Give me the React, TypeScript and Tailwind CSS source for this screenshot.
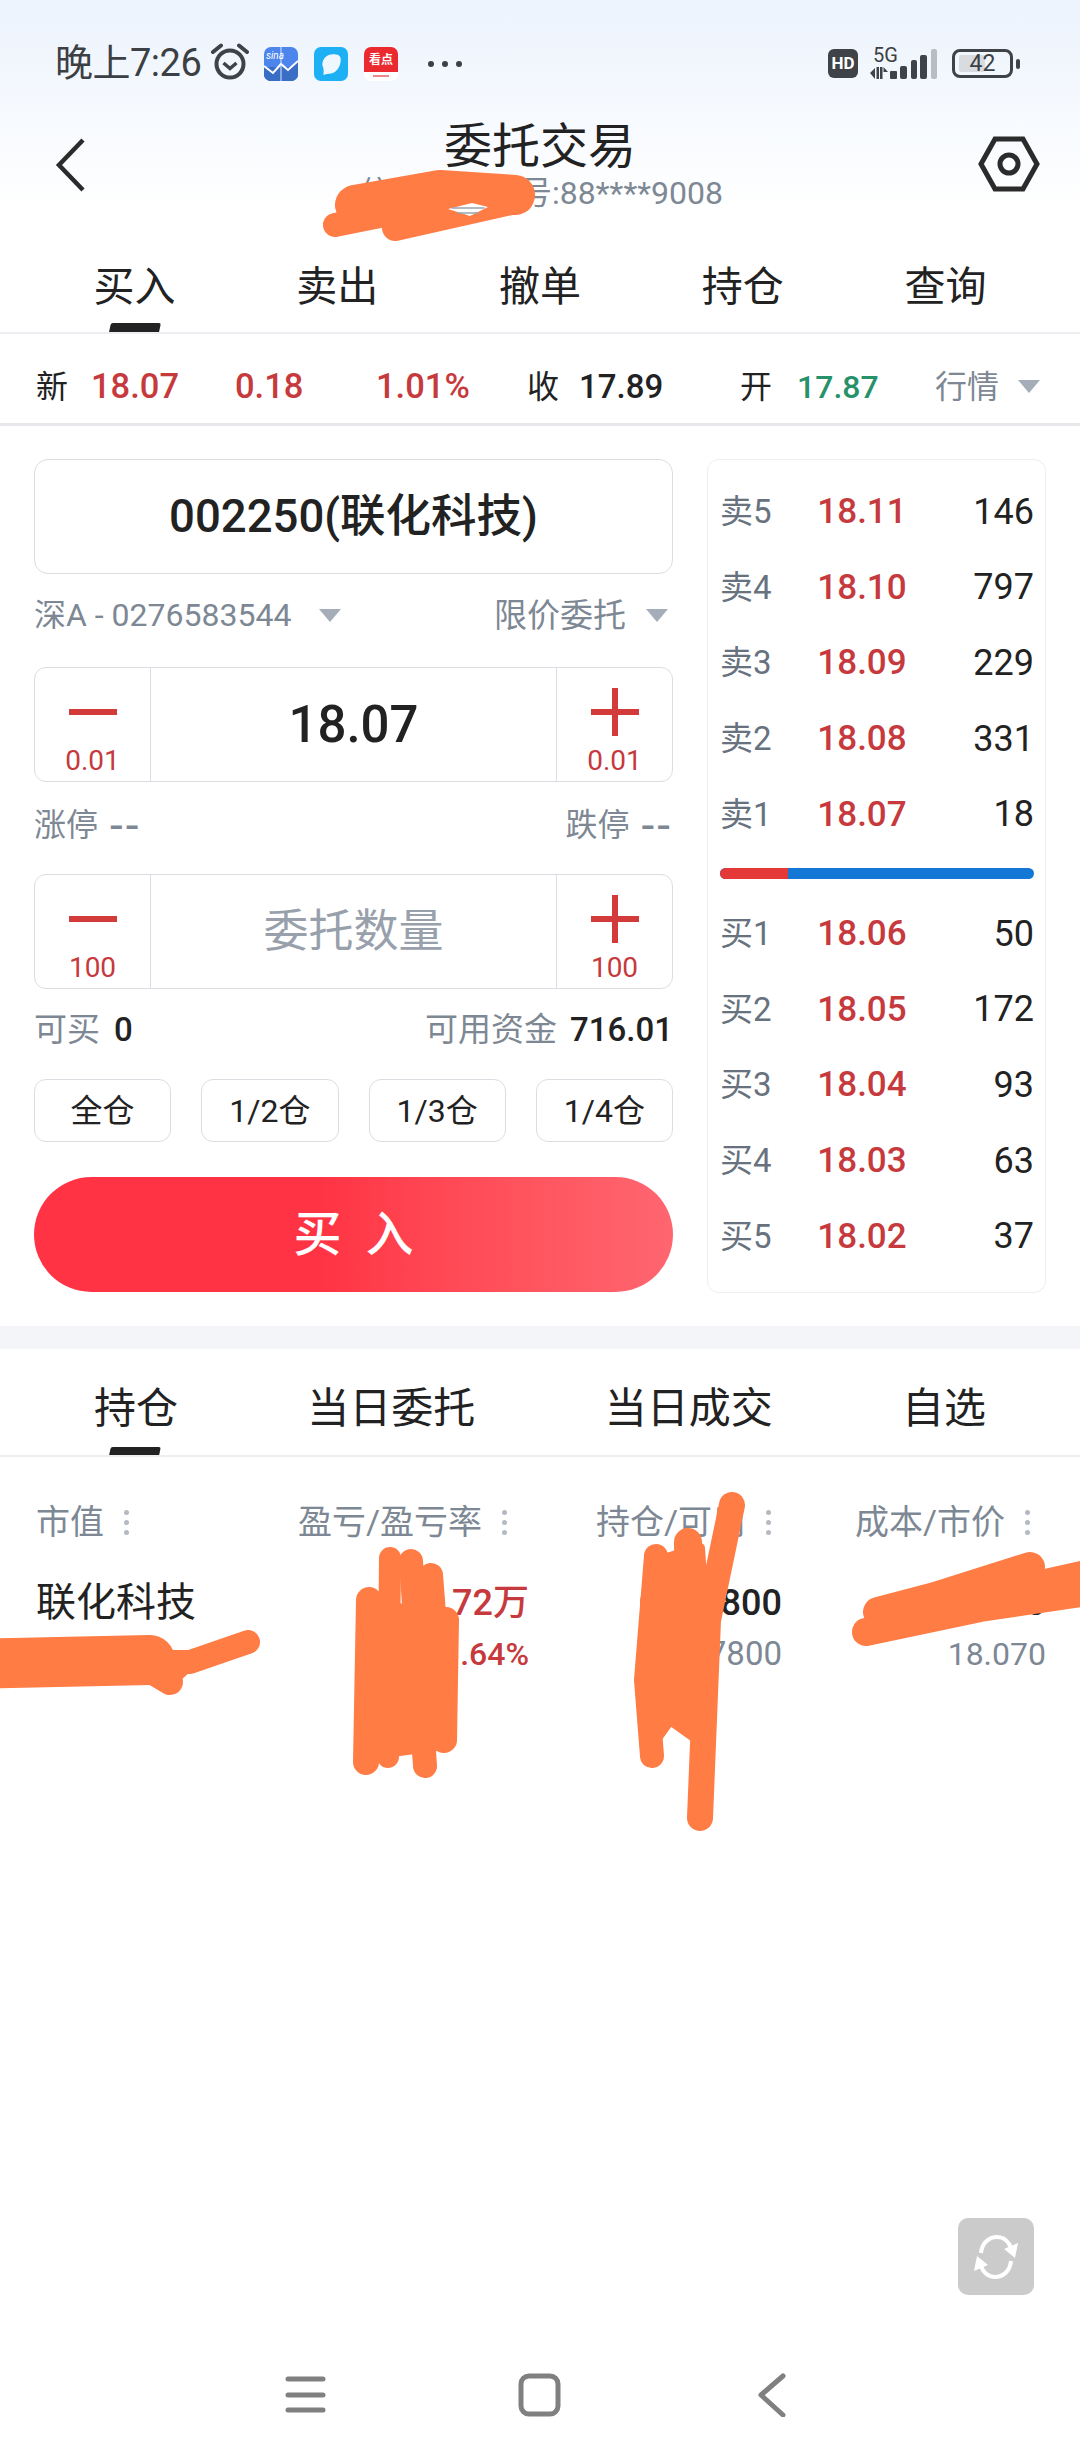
import React from "react";

const FONT = "[font-family:Roboto,'Noto_Sans_CJK_SC',sans-serif]";

function Triangle({ className }: { className: string }) {
  return (
    <svg viewBox="0 0 22 13" className={className}>
      <path d="M0 0H22L11 13Z" fill="#a4adb8" />
    </svg>
  );
}

function StatusBar() {
  return (
    <div className="flex h-[100px] items-start pl-[55px] pt-[44px]">
      <span className="w-[155px] text-[38px] leading-[38px] text-[#3c3f43] tracking-[-0.5px] whitespace-nowrap">晚上7:26</span>
      <svg viewBox="0 0 40 38" className="h-[38px] w-[40px] -mt-[1px]" fill="none" stroke="#3f4246">
        <circle cx="20" cy="21" r="13.5" strokeWidth="4" />
        <path d="M13.5 20l6.5 5.5 6.5-5.5" strokeWidth="3.5" />
        <path d="M3 9 11 2.5M37 9 29 2.5" strokeWidth="4" strokeLinecap="round" />
      </svg>
      <div className="relative ml-[14px] mt-[3px] h-[34px] w-[34px] overflow-hidden rounded-[7px] bg-[#4c86ec]">
        <svg viewBox="0 0 34 34" className="h-full w-full">
          <rect y="20" width="34" height="14" fill="#3a6ec4" />
          <path d="M0 19l9 7 8-9 7 6 10-9v21H0Z" fill="#3a6ec4" />
          <path d="M0 19l9 7 8-9 7 6 10-9" fill="none" stroke="#fff" strokeWidth="2" />
          <rect x="16.5" width="1" height="34" fill="#dbe7fb" />
        </svg>
        <span className="absolute left-[2px] top-[3px] text-[10px] leading-[12px] italic text-white">sina</span>
      </div>
      <div className="ml-[16px] mt-[3px] flex h-[34px] w-[34px] items-center justify-center rounded-[7px] bg-[#1eb0f5]">
        <svg viewBox="0 0 24 24" className="h-[26px] w-[26px]">
          <path d="M4 13C4 7 8 3 14 3c4 0 7 1 7 5 0 7-5 13-11 13-2 0-4 1-5 1 0-2 1-4-1-9Z" fill="#eef7fe" />
        </svg>
      </div>
      <div className="relative ml-[16px] mt-[3px] h-[34px] w-[34px] overflow-hidden rounded-[7px] bg-white">
        <div className="flex h-[25px] items-center justify-center bg-[#ea2a2e] text-[12px] font-bold leading-none text-white whitespace-nowrap">看点</div>
        <div className="mx-auto mt-[3px] h-[2px] w-[16px] bg-[#e88]" />
      </div>
      <div className="ml-[30px] mt-[17px] flex gap-[8px]">
        <span className="h-[6px] w-[6px] rounded-full bg-[#3c3f43]" />
        <span className="h-[6px] w-[6px] rounded-full bg-[#3c3f43]" />
        <span className="h-[6px] w-[6px] rounded-full bg-[#3c3f43]" />
      </div>
      <div className="ml-auto flex items-start pr-[67px]">
        <div className="mt-[5px] flex h-[29px] w-[30px] items-center justify-center rounded-[6px] bg-[#3f4246] text-[17px] font-bold leading-none text-white">HD</div>
        <div className="relative ml-[12px] mt-[5px] h-[30px] w-[67px]">
          <svg viewBox="0 0 67 30" className="h-[30px] w-[67px]" fill="#3f4246">
            <path d="M0 24 5 19V30ZM6.500 18H9V30H6.500ZM10 18H12.500V30H10ZM13.500 18 18 23H13.500Z" />
            <rect x="20" y="22" width="7" height="8" rx="1" />
            <rect x="30" y="17" width="7" height="13" rx="2" />
            <rect x="41" y="11" width="6" height="19" rx="2" />
            <rect x="50" y="6" width="7" height="24" rx="2" />
            <rect x="61" y="0" width="6" height="30" rx="2" fill="#b9bcc0" />
          </svg>
          <span className="absolute -top-[4px] left-[3px] text-[20px] leading-[20px] text-[#3c3f43]">5G</span>
        </div>
        <div className="relative ml-[15px] mt-[5px] flex h-[29px] w-[61px] items-center justify-center rounded-[8px] border-[3px] border-[#3f4246]">
          <span className="absolute bottom-[3px] left-[4px] top-[3px] w-[26px] rounded-[2px] bg-[#d8dbdf]" />
          <span className="relative text-[23px] leading-none text-[#3c3f43]">42</span>
          <span className="absolute -right-[10px] top-[7px] h-[10px] w-[4px] rounded-[2px] bg-[#3f4246]" />
        </div>
      </div>
    </div>
  );
}

function Header() {
  return (
    <div className="flex h-[110px] items-start justify-between px-[40px]">
      <div className="w-[62px] pl-[14px]">
        <svg viewBox="0 0 32 54" className="mt-[38px] h-[54px] w-[32px]" fill="none" stroke="#2b2b2b" strokeWidth="4.5">
          <path d="M29 2 5 27l24 25" />
        </svg>
      </div>
      <div className="flex flex-col items-center">
        <span className="mt-[20px] text-[48px] leading-[54px] text-[#222]">委托交易</span>
        <span className="ml-[3px] mt-[1px] text-[32px] leading-[36px] text-[#7d8894] whitespace-nowrap">信用资金账号:88****9008</span>
      </div>
      <svg viewBox="0 0 62 56" className="mt-[36px] h-[56px] w-[62px]" fill="none" stroke="#2b2b2b">
        <path d="M17 3H45L59 28 45 53H17L3 28Z" strokeWidth="5" />
        <circle cx="31" cy="28" r="9" strokeWidth="5" />
      </svg>
    </div>
  );
}

function MainTabs() {
  return (
    <div className="grid h-[124px] grid-cols-5 border-b-[2px] border-[#eceef1] px-[33px]">
      {["买入", "卖出", "撤单", "持仓", "查询"].map((t, i) => (
        <div key={t} className="relative pt-[54px] text-center text-[41px] leading-[46px] text-[#222]">
          {t}
          {i === 0 && <span className="absolute bottom-0 left-[77px] h-[9px] w-[50px] -skew-x-12 rounded-t-[2px] bg-[#222]" />}
        </div>
      ))}
    </div>
  );
}

function QuoteRow() {
  return (
    <div className="flex h-[92px] items-center border-b-[3px] border-[#e6e8eb] pl-[36px] pt-[16px] text-[34.5px] font-medium leading-none whitespace-nowrap">
      <span className="w-[55px] text-[32px] font-normal text-[#222]">新</span>
      <span className="w-[144px] text-[#c63a3e]">18.07</span>
      <span className="w-[141px] text-[#c63a3e]">0.18</span>
      <span className="w-[151px] text-[#c63a3e]">1.01%</span>
      <span className="w-[52px] text-[32px] font-normal text-[#222]">收</span>
      <span className="w-[161px] text-[33px] text-[#222]">17.89</span>
      <span className="w-[57px] text-[32px] font-normal text-[#222]">开</span>
      <span className="w-[138px] text-[32px] text-[#27916a]">17.87</span>
      <span className="w-[83px] text-[32px] font-normal text-[#7d8894]">行情</span>
      <Triangle className="h-[13px] w-[22px]" />
    </div>
  );
}

function Stepper({ step, value, placeholder }: { step: string; value?: string; placeholder?: string }) {
  const Side = ({ plus }: { plus: boolean }) => (
    <div className="flex w-[115px] flex-col items-center">
      <svg viewBox="0 0 48 48" className="mt-[20px] h-[48px] w-[48px]">
        <rect y="21" width="48" height="6" fill="#d33b3b" />
        {plus && <rect x="21" width="6" height="48" fill="#d33b3b" />}
      </svg>
      <span className="mt-[10px] text-[28px] leading-[30px] text-[#c63a3e]">{step}</span>
    </div>
  );
  return (
    <div className="flex h-[115px] rounded-[12px] border border-[#dadee3]">
      <Side plus={false} />
      <div className="flex flex-1 items-center justify-center border-x border-[#dadee3]">
        {value ? (
          <span className="text-[51px] font-medium leading-none text-[#222]">{value}</span>
        ) : (
          <span className="text-[45px] leading-none text-[#98a1ab]">{placeholder}</span>
        )}
      </div>
      <Side plus />
    </div>
  );
}

function LimitLabel({ text }: { text: string }) {
  return (
    <span className="flex items-center">
      {text}
      <span className="ml-[12px] text-[46px] leading-[32px] tracking-[3px]">--</span>
    </span>
  );
}

function TradeForm() {
  return (
    <div className="w-[639px]">
      <div className="flex h-[115px] items-center justify-center rounded-[14px] border border-[#dadee3] text-[45.5px] font-medium leading-none text-[#222]">
        002250(联化科技)
      </div>
      <div className="flex h-[93px] items-center pb-[11px] text-[32px] leading-none text-[#7d8894]">
        <span className="w-[285px] whitespace-nowrap">深A - 0276583544</span>
        <Triangle className="h-[13px] w-[22px]" />
        <span className="ml-auto text-[33px]">限价委托</span>
        <Triangle className="ml-[20px] mr-[5px] h-[13px] w-[22px]" />
      </div>
      <Stepper step="0.01" value="18.07" />
      <div className="flex h-[92px] items-center justify-between pb-[6px] text-[32px] leading-none text-[#7d8894]">
        <LimitLabel text="涨停" />
        <LimitLabel text="跌停" />
      </div>
      <Stepper step="100" placeholder="委托数量" />
      <div className="flex h-[80px] items-center text-[33px] leading-none text-[#7d8894]">
        <span>可买</span>
        <span className="ml-[14px] font-medium text-[#222]">0</span>
        <span className="ml-auto">可用资金</span>
        <span className="ml-[13px] font-medium text-[#222]">716.01</span>
      </div>
      <div className="mt-[10px] grid grid-cols-4 gap-[30px]">
        {["全仓", "1/2仓", "1/3仓", "1/4仓"].map((t) => (
          <div key={t} className="flex h-[63px] items-center justify-center rounded-[12px] border border-[#dadee3] text-[32px] leading-none text-[#222]">
            {t}
          </div>
        ))}
      </div>
      <div className="mt-[35px] flex h-[115px] items-center justify-center rounded-full bg-gradient-to-r from-[#ff3344] from-45% to-[#ff6670] text-[48px] font-medium leading-none text-white">
        买&nbsp;&nbsp;入
      </div>
    </div>
  );
}

const sells = [["卖5", "18.11", "146"], ["卖4", "18.10", "797"], ["卖3", "18.09", "229"], ["卖2", "18.08", "331"], ["卖1", "18.07", "18"]];
const buys = [["买1", "18.06", "50"], ["买2", "18.05", "172"], ["买3", "18.04", "93"], ["买4", "18.03", "63"], ["买5", "18.02", "37"]];

function DepthRow({ row }: { row: string[] }) {
  return (
    <div className="grid h-[75.6px] grid-cols-[84px_1fr_114px] items-center text-[35px] leading-none">
      <span className="text-[33px] text-[#67727e]">{row[0]}</span>
      <span className="text-center font-medium text-[#c63a3e]">{row[1]}</span>
      <span className="text-right text-[36px] text-[#222]">{row[2]}</span>
    </div>
  );
}

function Depth() {
  return (
    <div className="h-[834px] w-[339px] rounded-[12px] border border-[#eceef1] pl-[12px] pr-[11px] pt-[14px]">
      {sells.map((r) => <DepthRow key={r[0]} row={r} />)}
      <div className="mb-[17px] mt-[16px] flex h-[11px] overflow-hidden rounded-full bg-[#1377d6]">
        <div className="w-[68px] bg-[#e53838]" />
      </div>
      {buys.map((r) => <DepthRow key={r[0]} row={r} />)}
    </div>
  );
}

function SubTabs() {
  return (
    <div className="flex h-[108px] justify-between border-b-[2px] border-[#eceef1] px-[94px]">
      {["持仓", "当日委托", "当日成交", "自选"].map((t, i) => (
        <div key={t} className="relative pt-[37px] text-[42px] leading-[46px] text-[#222]">
          {t}
          {i === 0 && <span className="absolute bottom-0 left-[16px] h-[8px] w-[50px] -skew-x-12 rounded-t-[2px] bg-[#222]" />}
        </div>
      ))}
    </div>
  );
}

function Dots() {
  return (
    <span className="ml-[20px] flex flex-col gap-[5px]">
      <i className="h-[5px] w-[5px] rounded-full bg-[#b4bac2]" />
      <i className="h-[5px] w-[5px] rounded-full bg-[#b4bac2]" />
      <i className="h-[5px] w-[5px] rounded-full bg-[#b4bac2]" />
    </span>
  );
}

function Holdings() {
  return (
    <div className="relative">
      <div className="flex h-[124px] items-start pt-[47px] text-[34px] leading-[36px] text-[#7d8894]">
        <div className="ml-[36px] flex w-[262px] items-center">市值<Dots /></div>
        <div className="flex w-[298px] items-center whitespace-nowrap">盈亏/盈亏率<Dots /></div>
        <div className="flex w-[259px] items-center whitespace-nowrap">持仓/可用<Dots /></div>
        <div className="flex items-center whitespace-nowrap">成本/市价<Dots /></div>
      </div>
      <div className="grid grid-cols-[36px_200px_293px_253px_264px] text-right text-[36px] leading-[44px]">
        <span />
        <div className="text-left">
          <div className="text-[40px] text-[#222] whitespace-nowrap">联化科技</div>
        </div>
        <div>
          <div className="font-medium text-[#c63a3e]">72万</div>
          <div className="mt-[7px] text-[32px] font-medium text-[#c63a3e]">.64%</div>
        </div>
        <div>
          <div className="font-medium text-[#222]">7800</div>
          <div className="mt-[7px] text-[33px] text-[#7d8894]">7800</div>
        </div>
        <div>
          <div className="text-[#222]">18.070</div>
          <div className="mt-[7px] text-[32px] text-[#7d8894]">18.070</div>
        </div>
      </div>
    </div>
  );
}

function Scribbles() {
  return (
    <svg viewBox="0 0 1080 2460" className="pointer-events-none absolute left-0 top-0 h-[2460px] w-[1080px]" fill="none" stroke="#ff7c45" strokeLinejoin="round" strokeLinecap="round">
      <path d="M355 205 440 190 515 195" strokeWidth="40" />
      <path d="M335 225 400 212" strokeWidth="24" />
      <path d="M395 228 520 200" strokeWidth="26" />
      <path d="M448 209 472 203 488 207 470 216Z" fill="#fff" stroke="none" />
      <path d="M452 208H484M458 213H478" stroke="#9aa3ad" strokeWidth="1.500" />

      <path d="M-30 1664 150 1660" strokeWidth="50" />
      <path d="M150 1670 170 1682" strokeWidth="26" />
      <path d="M190 1662 248 1642" strokeWidth="24" />
      <path d="M165 1650H190V1672L170 1690Z" fill="#ff7c45" stroke="none" />

      <path d="M368 1600 446 1620 444 1745 370 1755Z" fill="#ff7c45" strokeWidth="10" />
      <path d="M369 1600 366 1762" strokeWidth="26" />
      <path d="M390 1558 388 1757" strokeWidth="22" />
      <path d="M411 1561 425 1766" strokeWidth="24" />
      <path d="M431 1575 444 1740" strokeWidth="24" />
      <path d="M446 1620 444 1740" strokeWidth="26" />

      <path d="M645 1600 660 1560 700 1548 705 1620 698 1740 670 1720 652 1745Z" fill="#ff7c45" strokeWidth="10" />
      <path d="M732 1505 708 1620 700 1818" strokeWidth="26" />
      <path d="M688 1542 690 1720" strokeWidth="28" />
      <path d="M656 1556 646 1680 652 1756" strokeWidth="24" />

      <path d="M878 1612 935 1597 1030 1567" strokeWidth="30" />
      <path d="M866 1632 980 1608 1100 1590" strokeWidth="28" />
      <path d="M950 1592 1085 1562V1600L980 1612Z" fill="#ff7c45" strokeWidth="4" />
    </svg>
  );
}

function BottomNav() {
  return (
    <div className="flex h-[130px] items-start justify-center pt-[43px]">
      <svg viewBox="0 0 520 44" className="ml-[10px] h-[44px] w-[520px]" fill="none" stroke="#808080" strokeLinecap="round" strokeLinejoin="round" strokeWidth="5">
        <path d="M3 6H38M3 22H38M3 37H38" />
        <rect x="236" y="3" width="37" height="38" rx="8" />
        <path d="M498 3 476 22 498 42" />
      </svg>
    </div>
  );
}

export default function App() {
  return (
    <div className={`relative flex h-[2460px] w-[1080px] flex-col overflow-hidden bg-white ${FONT}`}>
      <div className="bg-gradient-to-b from-[#ecf3fd] to-white">
        <StatusBar />
        <Header />
      </div>
      <MainTabs />
      <QuoteRow />
      <div className="flex px-[34px] pt-[33px]">
        <TradeForm />
        <div className="ml-auto">
          <Depth />
        </div>
      </div>
      <div className="mt-[33px] h-[23px] bg-[#f3f5f9]" />
      <SubTabs />
      <Holdings />
      <div className="flex-1" />
      <BottomNav />
      <div className="absolute left-[958px] top-[2218px] flex h-[77px] w-[76px] items-center justify-center rounded-[10px] bg-[#cbcbcb]">
        <svg viewBox="0 0 48 48" className="h-[48px] w-[48px]" fill="none" stroke="#fff" strokeWidth="4">
          <path d="M9 20C10 9 18 4 25 4c7 0 12 5 14 11" />
          <path d="M39 28C38 39 30 44 23 44 16 44 11 39 9 33" />
          <path d="M46 10 43 25 32 16Z" fill="#fff" stroke="none" />
          <path d="M2 38 5 23 16 32Z" fill="#fff" stroke="none" />
        </svg>
      </div>
      <Scribbles />
    </div>
  );
}
